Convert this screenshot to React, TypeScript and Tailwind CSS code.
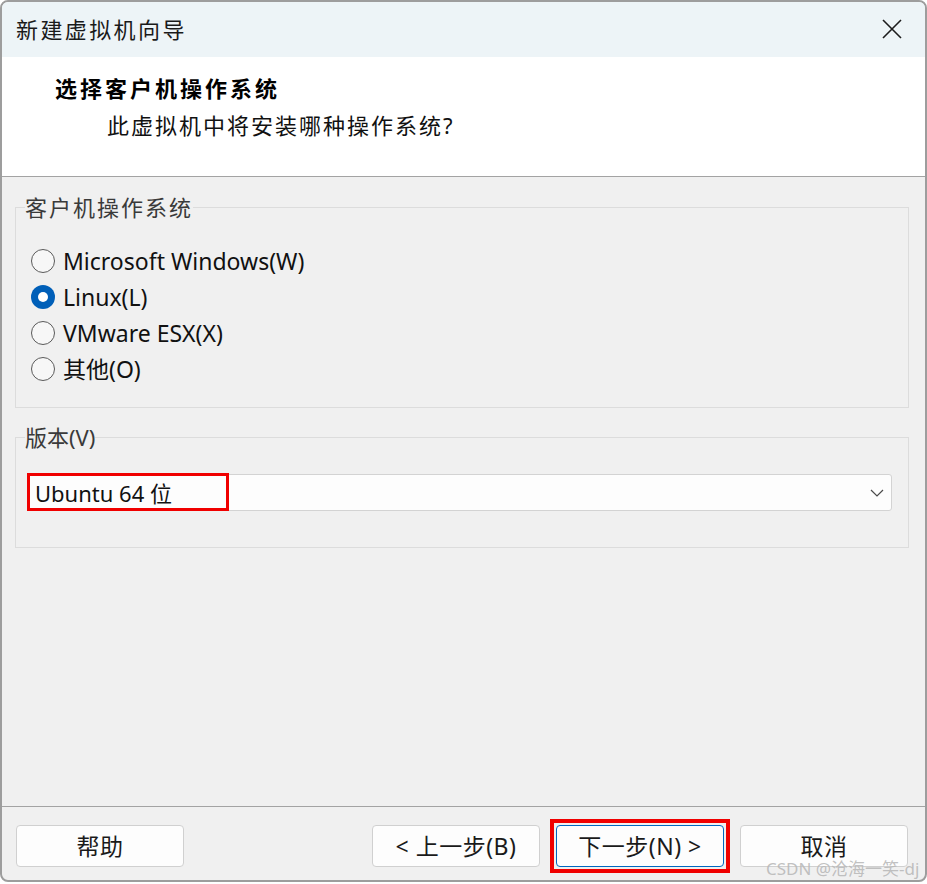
import React, { useState } from "react";

const FONT = "font-['Noto_Sans','Noto_Sans_CJK_SC',sans-serif]";

type Os = { id: string; label: string };

const OS_LIST: Os[] = [
  { id: "win", label: "Microsoft Windows(W)" },
  { id: "linux", label: "Linux(L)" },
  { id: "esx", label: "VMware ESX(X)" },
  { id: "other", label: "其他(O)" },
];

function Radio({ checked }: { checked: boolean }) {
  if (checked) {
    return (
      <span className="flex h-[24px] w-[24px] shrink-0 items-center justify-center rounded-full bg-[#005fb8]">
        <span className="h-[10px] w-[10px] rounded-full bg-white" />
      </span>
    );
  }
  return (
    <span className="h-[24px] w-[24px] shrink-0 rounded-full border-[1.5px] border-[#5a5a5a] bg-[#f7f7f7]" />
  );
}

function Button({ children, primary }: { children: React.ReactNode; primary?: boolean }) {
  return (
    <button
      className={
        primary
          ? "flex h-[42px] w-[168px] items-center justify-center rounded-[4px] border border-[#0067c0] bg-[#fdfdfd] text-[23px] leading-none tracking-[0.5px] text-[#1a1a1a]"
          : "flex h-[42px] w-[168px] items-center justify-center rounded-[4px] border border-[#d0d0d0] bg-[#fdfdfd] text-[23px] leading-none tracking-[0.5px] text-[#1a1a1a]"
      }
    >
      {children}
    </button>
  );
}

export default function App() {
  const [os, setOs] = useState("linux");

  return (
    <div className={`relative h-[884px] w-[927px] overflow-hidden bg-white ${FONT}`}>
      <div className="flex h-[882px] w-[927px] flex-col overflow-hidden rounded-[8px] border-2 border-[#9d9d9d] bg-[#f0f0f0]">
        {/* title bar */}
        <div className="flex h-[55px] shrink-0 items-center justify-between bg-[#edf4f7] pl-[14px] pr-[23px]">
          <span className="text-[22px] tracking-[2.4px] text-[#1a1a1a]">新建虚拟机向导</span>
          <svg width="20" height="20" viewBox="0 0 20 20" className="mt-[-2px]">
            <path d="M1 1 L19 19 M19 1 L1 19" stroke="#1c1c1c" strokeWidth="1.6" fill="none" />
          </svg>
        </div>

        {/* page header */}
        <div className="flex h-[120px] shrink-0 flex-col border-b border-[#a3a3a3] bg-white pl-[53px] pt-[16px]">
          <div className="text-[22px] font-bold leading-[30px] tracking-[3px] text-black">选择客户机操作系统</div>
          <div className="ml-[52px] mt-[7px] text-[22px] leading-[30px] tracking-[2px] text-[#111]">
            此虚拟机中将安装哪种操作系统?
          </div>
        </div>

        {/* body */}
        <div className="flex flex-1 flex-col pt-[16px]">
          <fieldset className="ml-[13px] mr-[16px] border border-[#dcdcdc] p-0">
            <legend className="ml-[9px] px-0 text-[22px] leading-[28px] tracking-[2px] text-[#3a3a3a]">
              客户机操作系统
            </legend>
            <div className="flex flex-col pb-[20px] pl-[15px] pt-[22px]">
              {OS_LIST.map((o) => (
                <label
                  key={o.id}
                  className="flex h-[36px] cursor-default items-center gap-[8px] text-[23px] text-[#111]"
                  onClick={() => setOs(o.id)}
                >
                  <Radio checked={os === o.id} />
                  <span className="leading-none">{o.label}</span>
                </label>
              ))}
            </div>
          </fieldset>

          <fieldset className="ml-[13px] mr-[16px] mt-[15px] border border-[#dcdcdc] p-0">
            <legend className="ml-[9px] px-0 text-[22px] leading-[28px] text-[#3a3a3a]">版本(V)</legend>
            <div className="pb-[36px] pl-[11px] pr-[16px] pt-[23px]">
              <div className="relative flex h-[37px] items-center justify-between rounded-[3px] border border-[#d3d3d3] bg-[#fdfdfd] pl-[7px] pr-[7px]">
                <span className="text-[22px] leading-none text-[#111]">Ubuntu 64 位</span>
                <svg width="14" height="8" viewBox="0 0 14 8">
                  <path d="M1 1 L7 7 L13 1" stroke="#4a4a4a" strokeWidth="1.2" fill="none" />
                </svg>
                <div className="absolute left-[-1px] top-[-2px] h-[38px] w-[202px] border-[3px] border-[#f00000]" />
              </div>
            </div>
          </fieldset>
        </div>

        {/* footer buttons */}
        <div className="flex h-[74px] shrink-0 items-start justify-between border-t border-[#a3a3a3] pl-[14px] pr-[17px] pt-[12px]">
          <div className="pt-[6px]">
            <Button>帮助</Button>
          </div>
          <div className="flex items-center gap-[10px]">
            <Button>&lt; 上一步(B)</Button>
            <div className="border-4 border-[#f00000] p-[2px]">
              <Button primary>下一步(N) &gt;</Button>
            </div>
            <Button>取消</Button>
          </div>
        </div>
      </div>

      <span className="absolute left-[766px] top-[859px] whitespace-nowrap text-[17px] leading-[20px] text-[#b9b9b9]/90">
        CSDN @沧海一笑-dj
      </span>
    </div>
  );
}
